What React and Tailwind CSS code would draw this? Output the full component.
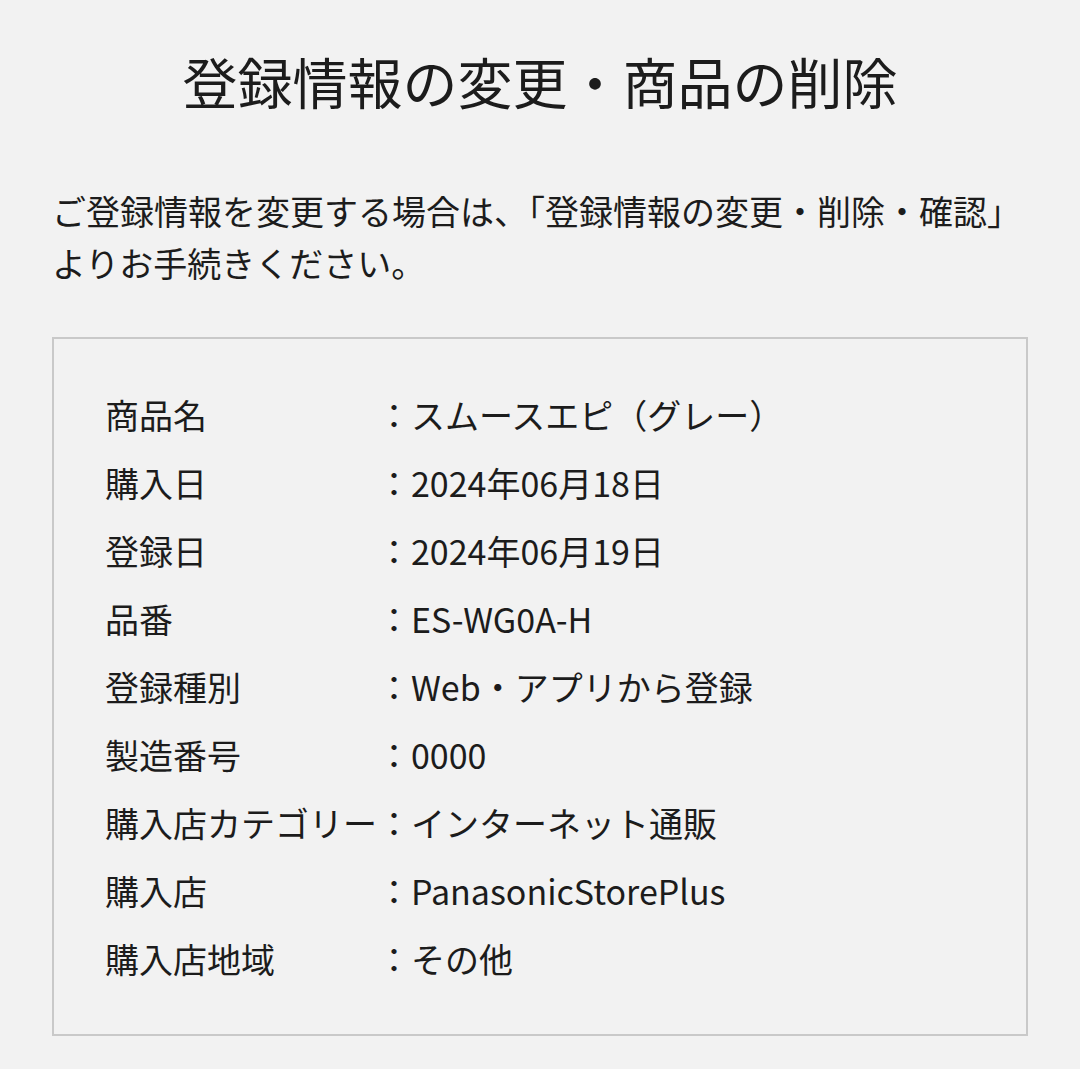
import React from "react";

const rows = [
  { label: "商品名", value: "スムースエピ（グレー）" },
  { label: "購入日", value: "2024年06月18日" },
  { label: "登録日", value: "2024年06月19日" },
  { label: "品番", value: "ES-WG0A-H" },
  { label: "登録種別", value: "Web・アプリから登録" },
  { label: "製造番号", value: "0000" },
  { label: "購入店カテゴリー", value: "インターネット通販" },
  { label: "購入店", value: "PanasonicStorePlus" },
  { label: "購入店地域", value: "その他" },
];

const App = () => {
  return (
    <div
      className="min-h-[1069px] bg-[#f2f2f2] text-[#1c1c1c] px-[52px] pt-[40px] pb-[32px]"
      style={{ fontFamily: '"Noto Sans CJK JP", "Noto Sans", sans-serif' }}
    >
      <h1 className="text-center text-[55px] leading-[80px] font-normal">
        登録情報の変更・商品の削除
      </h1>

      <p className="mt-[65px] text-[34px] leading-[52px]">
        ご登録情報を変更する場合は、「登録情報の変更・削除・確認」
        <br />
        よりお手続きください。
      </p>

      <div className="mt-[48px] border-2 border-[#c9c9c9] pl-[51px] pr-4 pt-[41px] pb-[40px] h-[699px]">
        {rows.map((row) => (
          <div key={row.label} className="flex items-center h-[68px] text-[34px]">
            <span className="w-[272px] shrink-0 whitespace-nowrap">{row.label}</span>
            <span className="whitespace-nowrap">：{row.value}</span>
          </div>
        ))}
      </div>
    </div>
  );
};

export default App;
